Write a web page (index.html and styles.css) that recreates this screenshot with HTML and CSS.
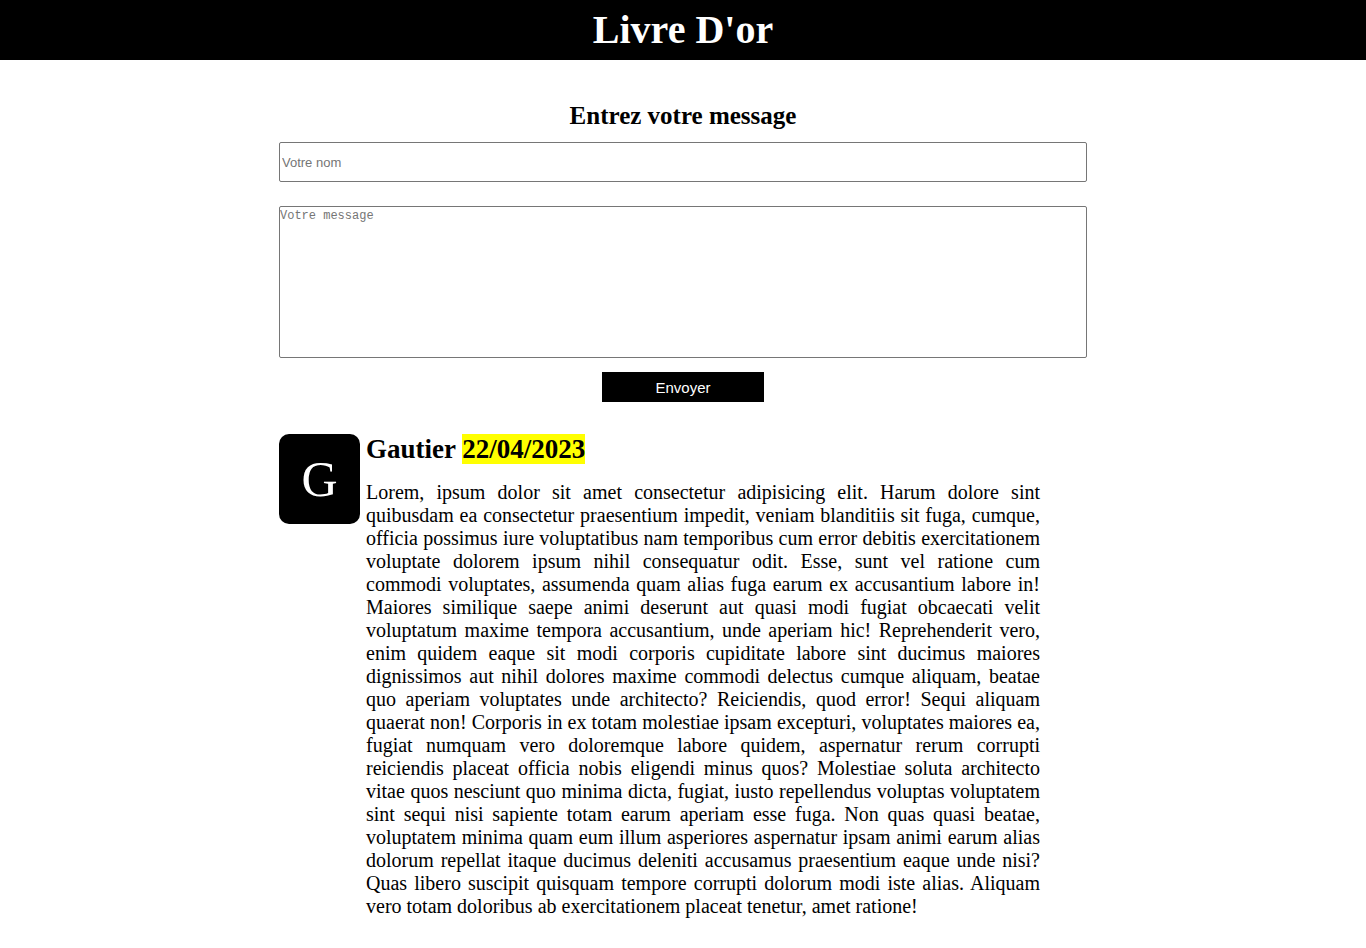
FILE: index.html
```html
<!DOCTYPE html>
<html lang="fr">
<head>
<meta charset="utf-8">
<title>Livre D'or</title>
<link rel="stylesheet" href="styles.css">
</head>
<body>
<header class="top">
  <h1 class="top-title">Livre D'or</h1>
</header>
<main class="wrap">
  <form class="form">
    <h2 class="form-title">Entrez votre message</h2>
    <input class="field" type="text" placeholder="Votre nom">
    <textarea class="area" placeholder="Votre message"></textarea>
    <button class="send" type="button">Envoyer</button>
  </form>
  <section class="comment">
    <div class="avatar">G</div>
    <div class="comment-body">
      <h3 class="comment-head">Gautier <span class="date">22/04/2023</span></h3>
      <p class="comment-text">Lorem, ipsum dolor sit amet consectetur adipisicing elit. Harum dolore sint quibusdam ea consectetur praesentium impedit, veniam blanditiis sit fuga, cumque, officia possimus iure voluptatibus nam temporibus cum error debitis exercitationem voluptate dolorem ipsum nihil consequatur odit. Esse, sunt vel ratione cum commodi voluptates, assumenda quam alias fuga earum ex accusantium labore in! Maiores similique saepe animi deserunt aut quasi modi fugiat obcaecati velit voluptatum maxime tempora accusantium, unde aperiam hic! Reprehenderit vero, enim quidem eaque sit modi corporis cupiditate labore sint ducimus maiores dignissimos aut nihil dolores maxime commodi delectus cumque aliquam, beatae quo aperiam voluptates unde architecto? Reiciendis, quod error! Sequi aliquam quaerat non! Corporis in ex totam molestiae ipsam excepturi, voluptates maiores ea, fugiat numquam vero doloremque labore quidem, aspernatur rerum corrupti reiciendis placeat officia nobis eligendi minus quos? Molestiae soluta architecto vitae quos nesciunt quo minima dicta, fugiat, iusto repellendus voluptas voluptatem sint sequi nisi sapiente totam earum aperiam esse fuga. Non quas quasi beatae, voluptatem minima quam eum illum asperiores aspernatur ipsam animi earum alias dolorum repellat itaque ducimus deleniti accusamus praesentium eaque unde nisi? Quas libero suscipit quisquam tempore corrupti dolorum modi iste alias. Aliquam vero totam doloribus ab exercitationem placeat tenetur, amet ratione!</p>
    </div>
  </section>
</main>
</body>
</html>
```

FILE: styles.css
```css
* { box-sizing: border-box; }
body {
  margin: 0;
  font-family: "Liberation Serif", "Times New Roman", serif;
  color: #000;
  background: #fff;
}
.top {
  background: #000;
  height: 60px;
  display: flex;
  align-items: center;
  justify-content: center;
}
.top-title {
  margin: 0;
  color: #fff;
  font-size: 40px;
  font-weight: bold;
  line-height: 1;
}
.wrap {
  width: 808px;
  margin: 0 auto;
  padding-top: 41px;
}
.form {
  display: flex;
  flex-direction: column;
  align-items: center;
}
.form-title {
  margin: 0 0 12px;
  font-size: 25px;
  font-weight: bold;
  line-height: 29px;
}
.field {
  width: 100%;
  height: 40px;
  border: 1px solid #767676;
  border-radius: 2px;
  padding: 0 2px;
  font-family: "Liberation Sans", Arial, sans-serif;
  font-size: 13px;
}
.field::placeholder, .area::placeholder { color: #757575; }
.area {
  width: 100%;
  height: 152px;
  margin-top: 24px;
  border: 1px solid #767676;
  border-radius: 2px;
  padding: 2px 0;
  font-family: "Liberation Mono", "DejaVu Sans Mono", monospace;
  font-size: 12px;
  resize: none;
}
.send {
  margin-top: 14px;
  width: 162px;
  height: 30px;
  background: #000;
  color: #fff;
  border: none;
  font-family: "Liberation Sans", Arial, sans-serif;
  font-size: 15px;
}
.comment {
  margin-top: 32px;
  display: flex;
  gap: 6px;
  align-items: flex-start;
}
.avatar {
  flex: none;
  width: 81px;
  height: 90px;
  background: #000;
  color: #fff;
  border-radius: 10px;
  display: flex;
  align-items: center;
  justify-content: center;
  font-size: 50px;
  line-height: 1;
}
.comment-body {
  width: 674px;
}
.comment-head {
  margin: 0;
  font-size: 27px;
  line-height: 30px;
  font-weight: bold;
}
.date { background: #ff0; }
.comment-text {
  margin: 17px 0 0;
  font-size: 20px;
  line-height: 23px;
  text-align: justify;
}
```
